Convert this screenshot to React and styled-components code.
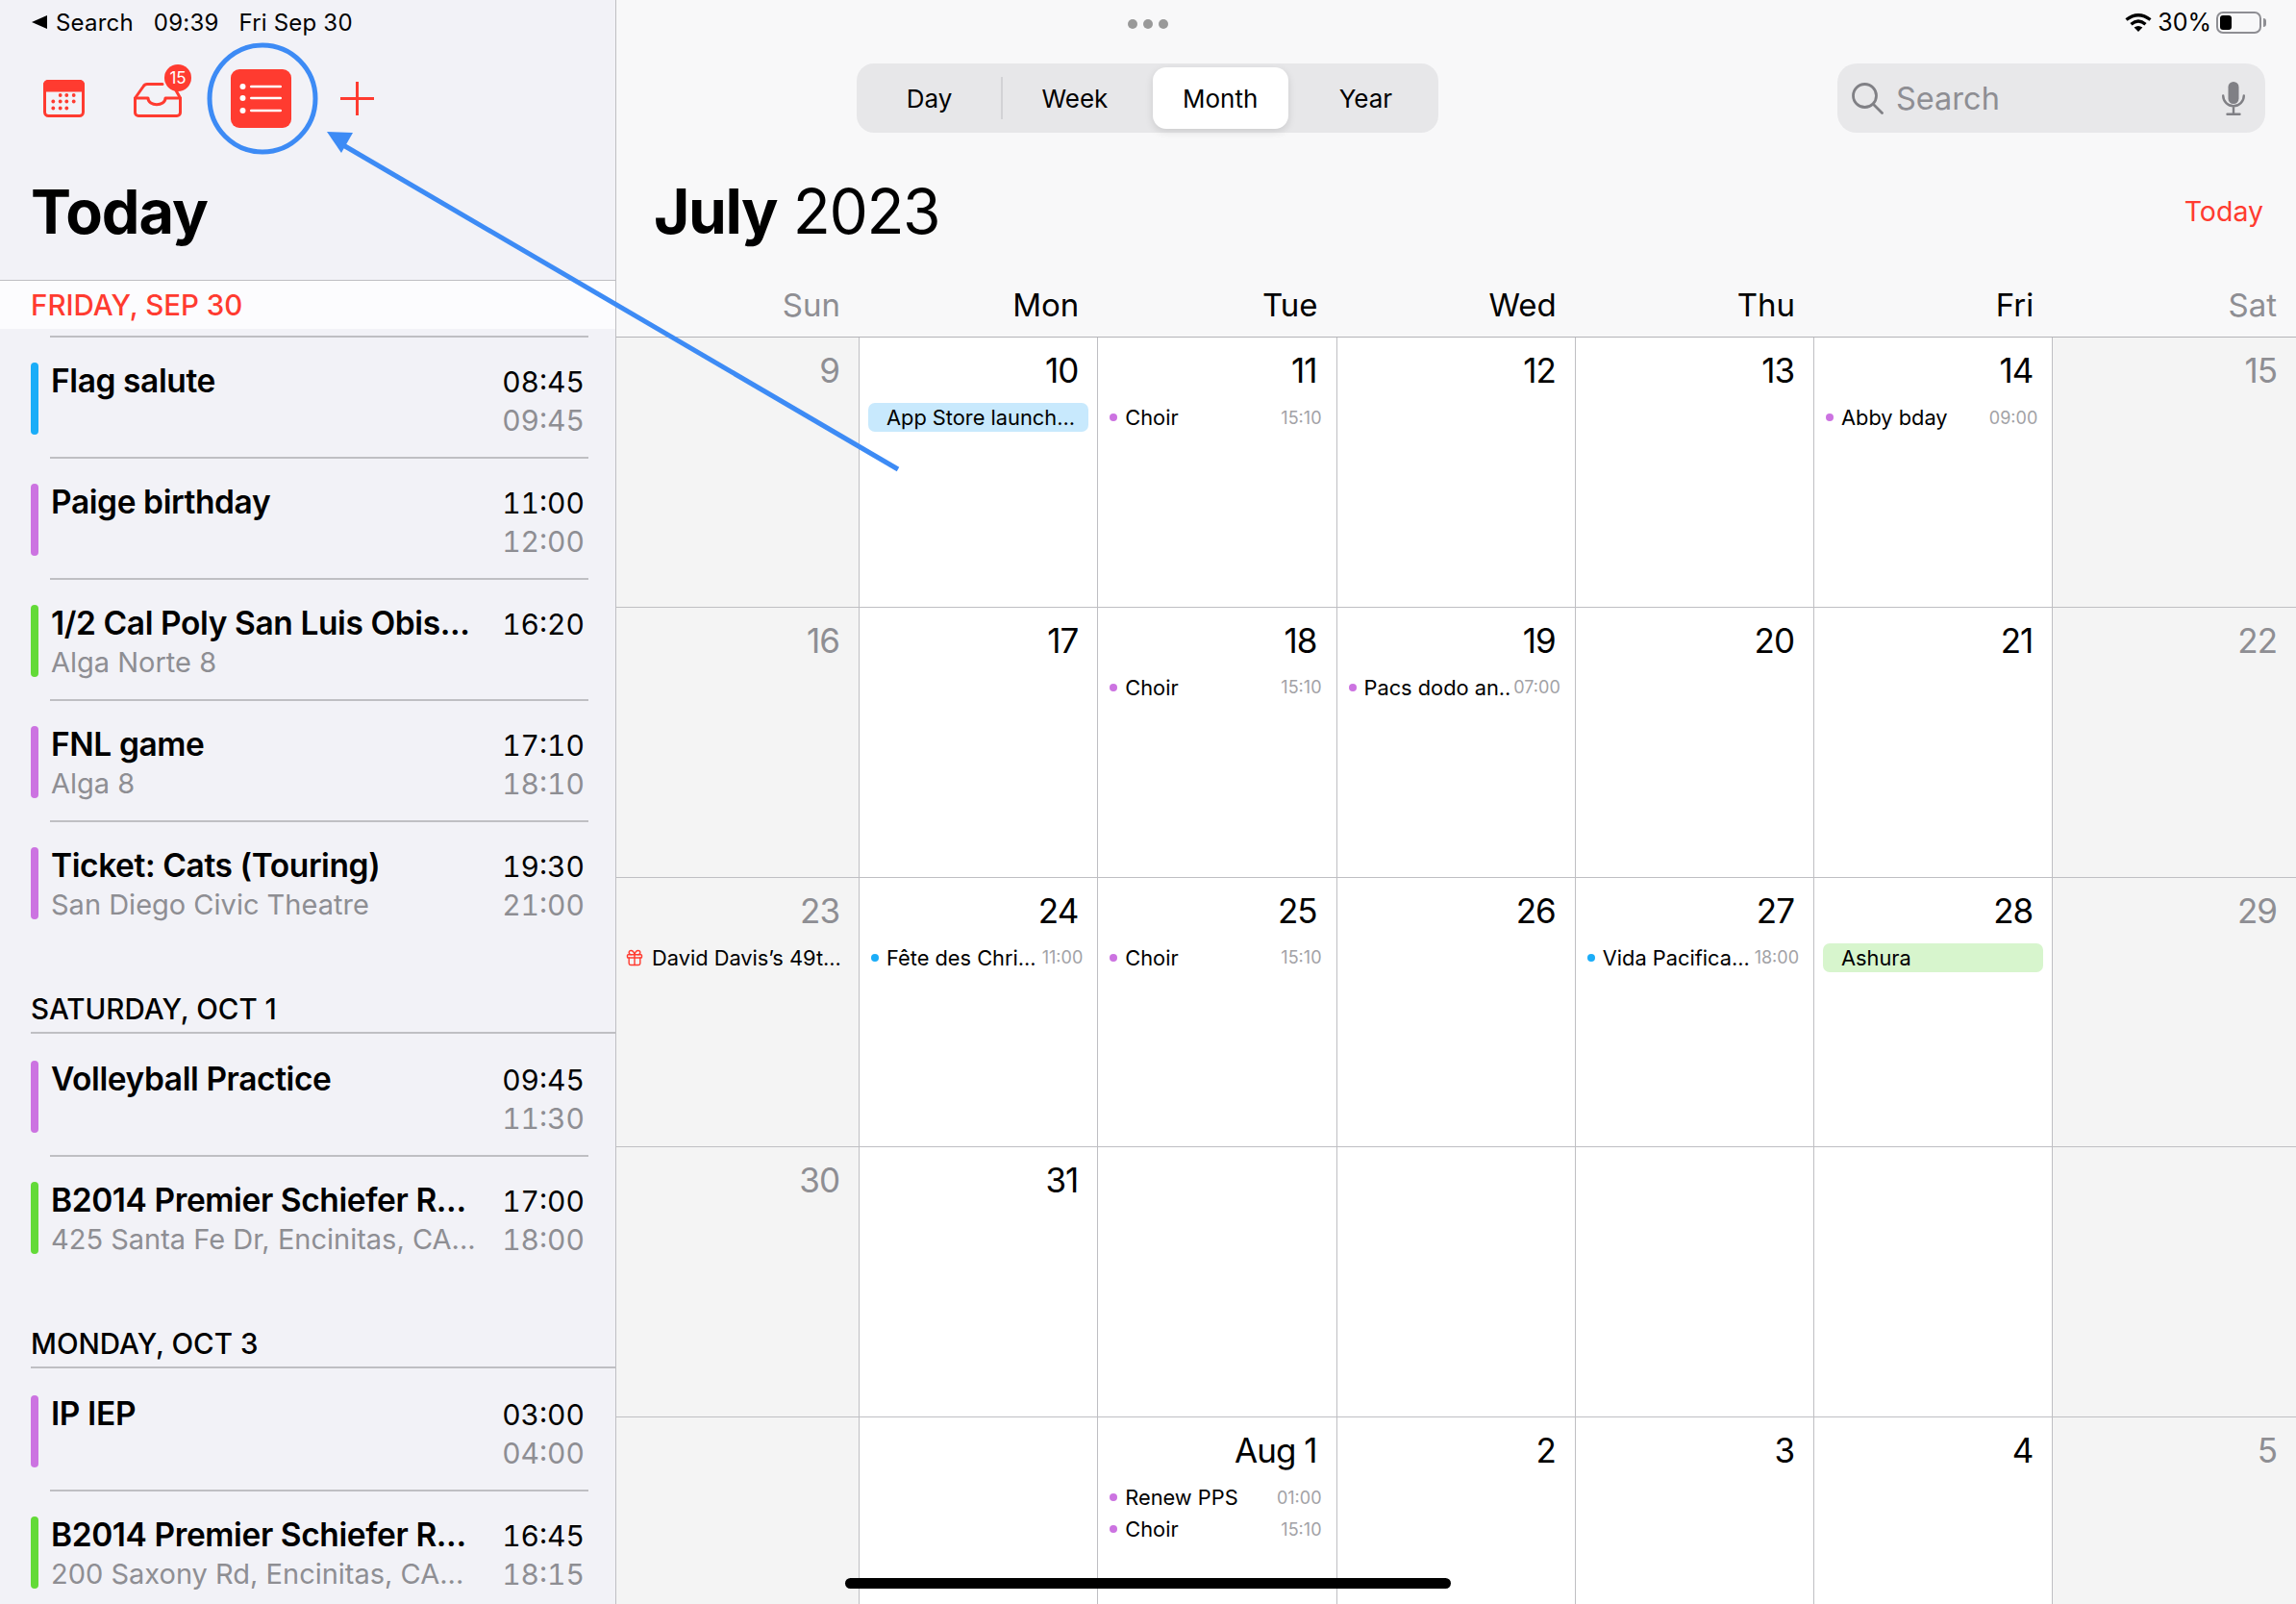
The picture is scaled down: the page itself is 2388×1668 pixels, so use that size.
import React from 'react';
import styled, { createGlobalStyle } from 'styled-components';
import { Gift } from 'lucide-react';

const RED = '#ff3b30';
const BLUE = '#1badf8';
const PURPLE = '#cc73e1';
const GREEN = '#63da38';
const GRAY = '#8e8e93';
const LINE = '#bfbfc3';

const GlobalStyle = createGlobalStyle`
  html, body {
    margin: 0;
    padding: 0;
    background: #f8f8f9;
    font-family: Inter, "Liberation Sans", sans-serif;
    color: #000;
  }
`;

const Screen = styled.div`
  position: relative;
  display: flex;
  width: 2388px;
  height: 1668px;
  overflow: hidden;
`;

/* sidebar */

const Sidebar = styled.aside`
  width: 640px;
  flex-shrink: 0;
  background: #f2f2f7;
  border-right: 1px solid ${LINE};
`;

const StatusBar = styled.div`
  display: flex;
  align-items: center;
  height: 46px;
  padding-left: 33px;
  font-size: 24px;
  letter-spacing: 0.2px;
`;

const BackArrow = styled.span`
  width: 0;
  height: 0;
  margin-right: 9px;
  border-top: 7px solid transparent;
  border-bottom: 7px solid transparent;
  border-right: 16px solid #000;
`;

const StatusText = styled.span`
  margin-right: ${props => props.$gap || 0}px;
`;

const Toolbar = styled.div`
  display: flex;
  align-items: center;
  gap: 51px;
  height: 113px;
  padding-left: 45px;
`;

const InboxWrap = styled.div`
  position: relative;
  display: flex;
  margin-top: 3px;
`;

const Badge = styled.span`
  position: absolute;
  left: 32px;
  top: -19px;
  width: 28px;
  height: 28px;
  border-radius: 50%;
  background: ${RED};
  color: #fff;
  font-size: 17px;
  line-height: 28px;
  text-align: center;
`;

const SideTitle = styled.h1`
  margin: 0;
  height: 132px;
  padding-left: 32px;
  font-size: 63px;
  font-weight: 700;
  letter-spacing: -1px;
  line-height: 122px;
`;

const SectionHead = styled.div`
  font-size: 29.5px;
  font-weight: 500;
  color: ${props => (props.$today ? RED : '#000')};
`;

const TodayBand = styled(SectionHead)`
  height: 50px;
  padding-left: 32px;
  line-height: 50px;
  margin-bottom: 7px;
  border-top: 1px solid ${LINE};
  background: #fcfcfe;
`;

const DayHead = styled(SectionHead)`
  height: 46px;
  margin-top: 48px;
  margin-left: 32px;
  line-height: 45px;
  border-bottom: 2px solid ${LINE};
`;

const Item = styled.div`
  display: flex;
  height: 126px;
  padding: 27px 32px 0 32px;
  box-sizing: border-box;
  position: relative;
  &::before {
    content: '';
    position: absolute;
    left: 52px;
    right: 28px;
    top: 0;
    border-top: ${props => (props.$divider ? `2px solid ${LINE}` : '0')};
  }
`;

const Bar = styled.span`
  width: 8px;
  height: 75px;
  margin-top: 1px;
  margin-right: 13px;
  border-radius: 4px;
  background: ${props => props.$color};
`;

const ItemBody = styled.div`
  flex: 1;
  white-space: nowrap;
  overflow: hidden;
`;

const ItemTitle = styled.div`
  font-size: 33.5px;
  font-weight: 600;
  line-height: 40px;
  letter-spacing: -0.4px;
`;

const ItemSub = styled.div`
  margin-top: 1px;
  font-size: 29px;
  line-height: 40px;
  color: ${GRAY};
`;

const ItemTimes = styled.div`
  padding-top: 1px;
  text-align: right;
  font-size: 30px;
  line-height: 40px;
  font-feature-settings: 'tnum';
`;

const EndTime = styled.div`
  color: ${GRAY};
`;

/* main */

const Main = styled.main`
  flex: 1;
  min-width: 0;
  background: #f8f8f9;
`;

const TopRow = styled.div`
  display: flex;
  align-items: center;
  height: 46px;
  padding-right: 36px;
`;

const Dots = styled.div`
  display: flex;
  gap: 6px;
  margin-left: 532px;
  margin-top: 4px;
`;

const Dot = styled.span`
  width: 10px;
  height: 10px;
  border-radius: 50%;
  background: #999;
`;

const StatusRight = styled.div`
  display: flex;
  align-items: center;
  margin-left: auto;
  font-size: 25px;
`;

const Percent = styled.span`
  margin: 0 5px 0 6px;
`;

const Battery = styled.div`
  position: relative;
  width: 47px;
  height: 23px;
  box-sizing: border-box;
  border: 2px solid ${GRAY};
  border-radius: 7px;
  padding: 2px;
  &::after {
    content: '';
    position: absolute;
    right: -7px;
    top: 5px;
    width: 3px;
    height: 9px;
    border-radius: 0 3px 3px 0;
    background: ${GRAY};
  }
`;

const BatteryFill = styled.div`
  width: 12px;
  height: 100%;
  border-radius: 3px;
  background: #000;
`;

const ControlRow = styled.div`
  display: flex;
  align-items: flex-start;
  height: 113px;
  padding: 20px 32px 0 250px;
  box-sizing: border-box;
`;

const Segmented = styled.div`
  position: relative;
  display: flex;
  width: 605px;
  height: 72px;
  padding: 4px 0;
  box-sizing: border-box;
  border-radius: 18px;
  background: #e7e7e9;
`;

const Segment = styled.div`
  flex: 1;
  display: flex;
  align-items: center;
  justify-content: center;
  margin: 0 5px;
  font-size: 26px;
  border-radius: 14px;
  background: ${props => (props.$active ? '#fff' : 'transparent')};
  box-shadow: ${props => (props.$active ? '0 3px 8px rgba(0,0,0,0.12)' : 'none')};
`;

const SegmentDivider = styled.span`
  position: absolute;
  left: 150px;
  top: 14px;
  height: 44px;
  width: 2px;
  background: #d2d2d5;
`;

const SearchField = styled.div`
  display: flex;
  align-items: center;
  width: 445px;
  height: 72px;
  margin-left: auto;
  padding: 0 21px 0 15px;
  box-sizing: border-box;
  border-radius: 20px;
  background: #e8e8ea;
  color: ${GRAY};
  font-size: 32.5px;
`;

const SearchLabel = styled.span`
  margin-left: 13px;
  flex: 1;
`;

const TitleRow = styled.div`
  display: flex;
  align-items: flex-start;
  justify-content: space-between;
  height: 132px;
  padding: 0 34px 0 39px;
  box-sizing: border-box;
`;

const MonthTitle = styled.h2`
  margin: 0;
  font-size: 64px;
  font-weight: 400;
  line-height: 122px;
  letter-spacing: -1.4px;
`;

const MonthName = styled.span`
  font-weight: 700;
`;

const TodayLink = styled.span`
  color: ${RED};
  font-size: 28.5px;
  line-height: 122px;
`;

const Columns = `
  display: grid;
  grid-template-columns: 253px repeat(5, 248.25px) 1fr;
`;

const WeekHeader = styled.div`
  ${Columns}
  height: 60px;
  box-sizing: border-box;
  border-bottom: 1px solid #b4b4b8;
`;

const WeekDay = styled.div`
  padding-right: 20px;
  text-align: right;
  font-size: 33px;
  line-height: 52px;
  color: ${props => (props.$muted ? GRAY : '#000')};
`;

const Grid = styled.div`
  ${Columns}
  grid-auto-rows: 280.75px;
`;

const Cell = styled.div`
  box-sizing: border-box;
  min-width: 0;
  padding-top: 12px;
  border-right: 1px solid ${LINE};
  border-bottom: 1px solid ${LINE};
  background: ${props => (props.$weekend ? '#f4f4f4' : '#fff')};
  &:nth-child(7n) {
    border-right: 0;
  }
`;

const DayNumber = styled.div`
  height: 44px;
  margin-bottom: 12px;
  padding-right: 20px;
  text-align: right;
  font-size: 35px;
  line-height: 44px;
  letter-spacing: -1px;
  color: ${props => (props.$muted ? GRAY : '#000')};
`;

const EventList = styled.div`
  display: flex;
  flex-direction: column;
  gap: 3px;
`;

const EventRow = styled.div`
  display: flex;
  align-items: center;
  height: 30px;
  padding: 0 15px 0 12px;
  font-size: 21.8px;
  white-space: nowrap;
`;

const EventDot = styled.span`
  flex-shrink: 0;
  width: 8px;
  height: 8px;
  margin-right: 8px;
  border-radius: 50%;
  background: ${props => props.$color};
`;

const EventTime = styled.span`
  margin-left: auto;
  font-size: 18px;
  color: #a2a2a6;
`;

const EventPill = styled.div`
  height: 30px;
  margin: 0 9px;
  padding-left: 19px;
  border-radius: 7px;
  background: ${props => props.$color};
  font-size: 21.8px;
  line-height: 30px;
  white-space: nowrap;
`;

const GiftRow = styled(EventRow)`
  padding-left: 9px;
  svg {
    margin-right: 8px;
    color: ${RED};
  }
`;

/* things that lie over the page */

const Annotation = styled.svg`
  position: absolute;
  left: 0;
  top: 0;
  pointer-events: none;
`;

const HomeBar = styled.div`
  position: absolute;
  left: 879px;
  top: 1641px;
  width: 630px;
  height: 11px;
  border-radius: 6px;
  background: #000;
`;

const CalendarIcon = () => (
  <svg width="43" height="39" viewBox="0 0 43 39">
    <rect x="1.5" y="1.5" width="40" height="36" rx="4" fill="none" stroke={RED} strokeWidth="3" />
    <path d="M1.5 11V5a3.5 3.5 0 0 1 3.5-3.5h33a3.5 3.5 0 0 1 3.5 3.5v6z" fill={RED} stroke={RED} strokeWidth="3" />
    {[
      [17.7, 16], [24.3, 16], [31.7, 16],
      [10.3, 22.5], [17.7, 22.5], [24.3, 22.5], [31.7, 22.5],
      [10.3, 29.5], [17.7, 29.5], [24.3, 29.5],
    ].map(([cx, cy]) => (
      <circle key={`${cx}-${cy}`} cx={cx} cy={cy} r="1.9" fill={RED} />
    ))}
  </svg>
);

const InboxIcon = () => (
  <svg width="50" height="36" viewBox="0 0 50 36" fill="none" stroke={RED} strokeWidth="3">
    <path d="M1.5 16H15C15 25 33 25 33 16H48.5V31a3.5 3.5 0 0 1-3.5 3.5H5A3.5 3.5 0 0 1 1.5 31z" strokeLinejoin="round" />
    <path d="M1.5 16L10 4Q11.5 1.5 14 1.5H30M48.5 16L44 8" strokeLinecap="round" />
  </svg>
);

const ListIcon = () => (
  <svg width="63" height="61" viewBox="0 0 63 61">
    <rect width="63" height="61" rx="9" fill={RED} />
    {[18, 30, 43].map(y => (
      <g key={y}>
        <circle cx="12.5" cy={y} r="3" fill="#fff" />
        <rect x="20" y={y - 1.3} width="33" height="2.6" rx="1.3" fill="#fff" />
      </g>
    ))}
  </svg>
);

const PlusIcon = () => (
  <svg width="35" height="35" viewBox="0 0 35 35" stroke={RED} strokeWidth="3">
    <path d="M17.5 0V35M0 17.5H35" />
  </svg>
);

const WifiIcon = () => (
  <svg width="28" height="19" viewBox="0 0 28 19" fill="none" stroke="#000" strokeWidth="3.4">
    <path d="M1.5 6.5Q14-3 26.5 6.5" />
    <path d="M6.5 11.2Q14 5 21.5 11.2" />
    <path d="M14 19L9.6 14.6Q14 11.2 18.4 14.6Z" fill="#000" stroke="none" />
  </svg>
);

const SearchIcon = () => (
  <svg width="33" height="33" viewBox="0 0 33 33" fill="none" stroke="#808085" strokeWidth="2.8">
    <circle cx="13.5" cy="13.5" r="12" />
    <path d="M22.5 22.5L31.5 31.5" strokeLinecap="round" />
  </svg>
);

const MicIcon = () => (
  <svg width="24" height="35" viewBox="0 0 24 35" fill="none" stroke="#808085" strokeWidth="2.4">
    <rect x="6.5" y="0" width="11" height="23" rx="5.5" fill="#808085" stroke="none" />
    <path d="M1.2 14.5a10.8 10.8 0 0 0 21.6 0M12 25.5V33.8M5.5 33.8H18.5" strokeLinecap="round" />
  </svg>
);

const todayItems = [
  { color: BLUE, title: 'Flag salute', start: '08:45', end: '09:45' },
  { color: PURPLE, title: 'Paige birthday', start: '11:00', end: '12:00' },
  { color: GREEN, title: '1/2 Cal Poly San Luis Obis...', sub: 'Alga Norte 8', start: '16:20' },
  { color: PURPLE, title: 'FNL game', sub: 'Alga 8', start: '17:10', end: '18:10' },
  { color: PURPLE, title: 'Ticket: Cats (Touring)', sub: 'San Diego Civic Theatre', start: '19:30', end: '21:00' },
];

const sections = [
  {
    head: 'SATURDAY, OCT 1',
    items: [
      { color: PURPLE, title: 'Volleyball Practice', start: '09:45', end: '11:30' },
      { color: GREEN, title: 'B2014 Premier Schiefer R...', sub: '425 Santa Fe Dr, Encinitas, CA...', start: '17:00', end: '18:00' },
    ],
  },
  {
    head: 'MONDAY, OCT 3',
    items: [
      { color: PURPLE, title: 'IP IEP', start: '03:00', end: '04:00' },
      { color: GREEN, title: 'B2014 Premier Schiefer R...', sub: '200 Saxony Rd, Encinitas, CA...', start: '16:45', end: '18:15' },
    ],
  },
];

const choir = { kind: 'dot', color: PURPLE, title: 'Choir', time: '15:10' };

const days = [
  { n: '9' },
  { n: '10', events: [{ kind: 'pill', color: '#c8e9fd', title: 'App Store launch...' }] },
  { n: '11', events: [choir] },
  { n: '12' },
  { n: '13' },
  { n: '14', events: [{ kind: 'dot', color: PURPLE, title: 'Abby bday', time: '09:00' }] },
  { n: '15' },
  { n: '16' },
  { n: '17' },
  { n: '18', events: [choir] },
  { n: '19', events: [{ kind: 'dot', color: PURPLE, title: 'Pacs dodo an..', time: '07:00' }] },
  { n: '20' },
  { n: '21' },
  { n: '22' },
  { n: '23', events: [{ kind: 'gift', title: 'David Davis\u2019s 49t...' }] },
  { n: '24', events: [{ kind: 'dot', color: BLUE, title: 'Fête des Chri...', time: '11:00' }] },
  { n: '25', events: [choir] },
  { n: '26' },
  { n: '27', events: [{ kind: 'dot', color: BLUE, title: 'Vida Pacifica...', time: '18:00' }] },
  { n: '28', events: [{ kind: 'pill', color: '#d7f5cd', title: 'Ashura' }] },
  { n: '29' },
  { n: '30' },
  { n: '31' },
  { n: '' },
  { n: '' },
  { n: '' },
  { n: '' },
  { n: '' },
  { n: '' },
  { n: '' },
  { n: 'Aug 1', events: [{ kind: 'dot', color: PURPLE, title: 'Renew PPS', time: '01:00' }, choir] },
  { n: '2' },
  { n: '3' },
  { n: '4' },
  { n: '5' },
];

const weekDays = ['Sun', 'Mon', 'Tue', 'Wed', 'Thu', 'Fri', 'Sat'];

const AgendaItem = ({ item, divider }) => (
  <Item $divider={divider}>
    <Bar $color={item.color} />
    <ItemBody>
      <ItemTitle>{item.title}</ItemTitle>
      {item.sub && <ItemSub>{item.sub}</ItemSub>}
    </ItemBody>
    <ItemTimes>
      <div>{item.start}</div>
      {item.end && <EndTime>{item.end}</EndTime>}
    </ItemTimes>
  </Item>
);

const CalendarEvent = ({ event }) => {
  if (event.kind === 'pill') {
    return <EventPill $color={event.color}>{event.title}</EventPill>;
  }
  if (event.kind === 'gift') {
    return (
      <GiftRow>
        <Gift size={20} strokeWidth={1.7} />
        {event.title}
      </GiftRow>
    );
  }
  return (
    <EventRow>
      <EventDot $color={event.color} />
      {event.title}
      <EventTime>{event.time}</EventTime>
    </EventRow>
  );
};

export default function App() {
  return (
    <Screen>
      <GlobalStyle />
      <Sidebar>
        <StatusBar>
          <BackArrow />
          <StatusText $gap={21}>Search</StatusText>
          <StatusText $gap={21}>09:39</StatusText>
          <StatusText>Fri Sep 30</StatusText>
        </StatusBar>
        <Toolbar>
          <CalendarIcon />
          <InboxWrap>
            <InboxIcon />
            <Badge>15</Badge>
          </InboxWrap>
          <ListIcon />
          <PlusIcon />
        </Toolbar>
        <SideTitle>Today</SideTitle>
        <TodayBand $today>FRIDAY, SEP 30</TodayBand>
        {todayItems.map(item => (
          <AgendaItem key={item.title} item={item} divider />
        ))}
        {sections.map(section => (
          <section key={section.head}>
            <DayHead>{section.head}</DayHead>
            {section.items.map((item, i) => (
              <AgendaItem key={item.title} item={item} divider={i > 0} />
            ))}
          </section>
        ))}
      </Sidebar>

      <Main>
        <TopRow>
          <Dots>
            <Dot />
            <Dot />
            <Dot />
          </Dots>
          <StatusRight>
            <WifiIcon />
            <Percent>30%</Percent>
            <Battery>
              <BatteryFill />
            </Battery>
          </StatusRight>
        </TopRow>
        <ControlRow>
          <Segmented>
            <Segment>Day</Segment>
            <SegmentDivider />
            <Segment>Week</Segment>
            <Segment $active>Month</Segment>
            <Segment>Year</Segment>
          </Segmented>
          <SearchField>
            <SearchIcon />
            <SearchLabel>Search</SearchLabel>
            <MicIcon />
          </SearchField>
        </ControlRow>
        <TitleRow>
          <MonthTitle>
            <MonthName>July</MonthName> 2023
          </MonthTitle>
          <TodayLink>Today</TodayLink>
        </TitleRow>
        <WeekHeader>
          {weekDays.map((d, i) => (
            <WeekDay key={d} $muted={i === 0 || i === 6}>
              {d}
            </WeekDay>
          ))}
        </WeekHeader>
        <Grid>
          {days.map((day, i) => {
            const weekend = i % 7 === 0 || i % 7 === 6;
            return (
              <Cell key={i} $weekend={weekend}>
                <DayNumber $muted={weekend}>{day.n}</DayNumber>
                {day.events && (
                  <EventList>
                    {day.events.map((event, j) => (
                      <CalendarEvent key={j} event={event} />
                    ))}
                  </EventList>
                )}
              </Cell>
            );
          })}
        </Grid>
      </Main>

      <Annotation width="2388" height="1668" viewBox="0 0 2388 1668">
        <ellipse cx="273" cy="102.5" rx="55" ry="55.5" fill="none" stroke="#3d8bf5" strokeWidth="5" />
        <path d="M934 488L352 148" stroke="#3d8bf5" strokeWidth="5" fill="none" />
        <path d="M340 137L367 138L355 159Z" fill="#3d8bf5" />
      </Annotation>
      <HomeBar />
    </Screen>
  );
}
